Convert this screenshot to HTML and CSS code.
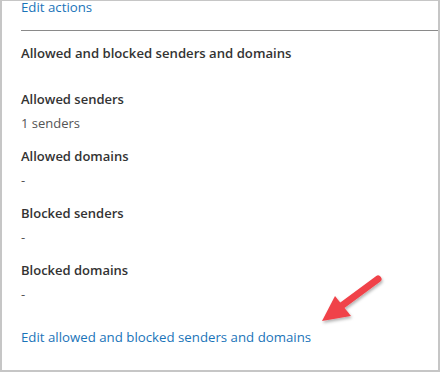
FILE: index.html
```html
<!DOCTYPE html>
<html lang="en">
<head>
  <meta charset="UTF-8" />
  <title>Allowed and blocked senders</title>
  <link rel="stylesheet" href="styles.css">
</head>
<body>
  <div class="frame">
    <a class="link top-link" href="#">Edit actions</a>
    <hr class="divider">

    <h2 class="section-title">Allowed and blocked senders and domains</h2>

    <div class="field">
      <div class="label">Allowed senders</div>
      <div class="value">1 senders</div>
    </div>
    <div class="field">
      <div class="label">Allowed domains</div>
      <div class="value">-</div>
    </div>
    <div class="field">
      <div class="label">Blocked senders</div>
      <div class="value">-</div>
    </div>
    <div class="field">
      <div class="label">Blocked domains</div>
      <div class="value">-</div>
    </div>

    <a class="link bottom-link" href="#">Edit allowed and blocked senders and domains</a>

    <!-- annotation arrow -->
    <svg class="arrow" width="80" height="64" viewBox="0 0 80 64">
      <defs>
        <filter id="sh" x="-20%" y="-20%" width="150%" height="150%">
          <feDropShadow dx="1" dy="2" stdDeviation="1.5" flood-color="#000" flood-opacity="0.3"/>
        </filter>
      </defs>
      <g filter="url(#sh)">
        <line x1="68" y1="10" x2="30" y2="38" stroke="#f0434a" stroke-width="7" stroke-linecap="round"/>
        <polygon points="12,52 25,27 41,47" fill="#f0434a"/>
      </g>
    </svg>
  </div>
</body>
</html>
```
FILE: styles.css
```css
html, body {
  margin: 0;
  padding: 0;
  background: #fff;
}
body {
  font-family: 'Open Sans', 'Noto Sans', sans-serif;
  font-size: 13px;
  color: #333;
}
.frame {
  position: relative;
  box-sizing: border-box;
  width: 440px;
  height: 372px;
  border: 2px solid #c6c6c6;
  border-top-width: 1px;
  padding-left: 19px;
  overflow: hidden;
}
.link {
  display: block;
  color: #1a74b9;
  text-decoration: none;
  font-size: 13.25px;
}
.top-link {
  margin-top: -3px;
  line-height: 18px;
}
.divider {
  margin: 14px 0 0 0;
  border: none;
  border-top: 1px solid #8a8a8a;
}
.section-title {
  margin: 13px 0 0 0;
  font-size: 13.15px;
  font-weight: 600;
  line-height: 18px;
  color: #333;
}
.field {
  margin-top: 15px;
}
.section-title + .field {
  margin-top: 28px;
}
.label {
  font-weight: 600;
  line-height: 18px;
  color: #333;
}
.value {
  margin-top: 6px;
  line-height: 18px;
  color: #555;
}
.bottom-link {
  margin-top: 25px;
  line-height: 18px;
}
.arrow {
  position: absolute;
  left: 308px;
  top: 268px;
}
```
